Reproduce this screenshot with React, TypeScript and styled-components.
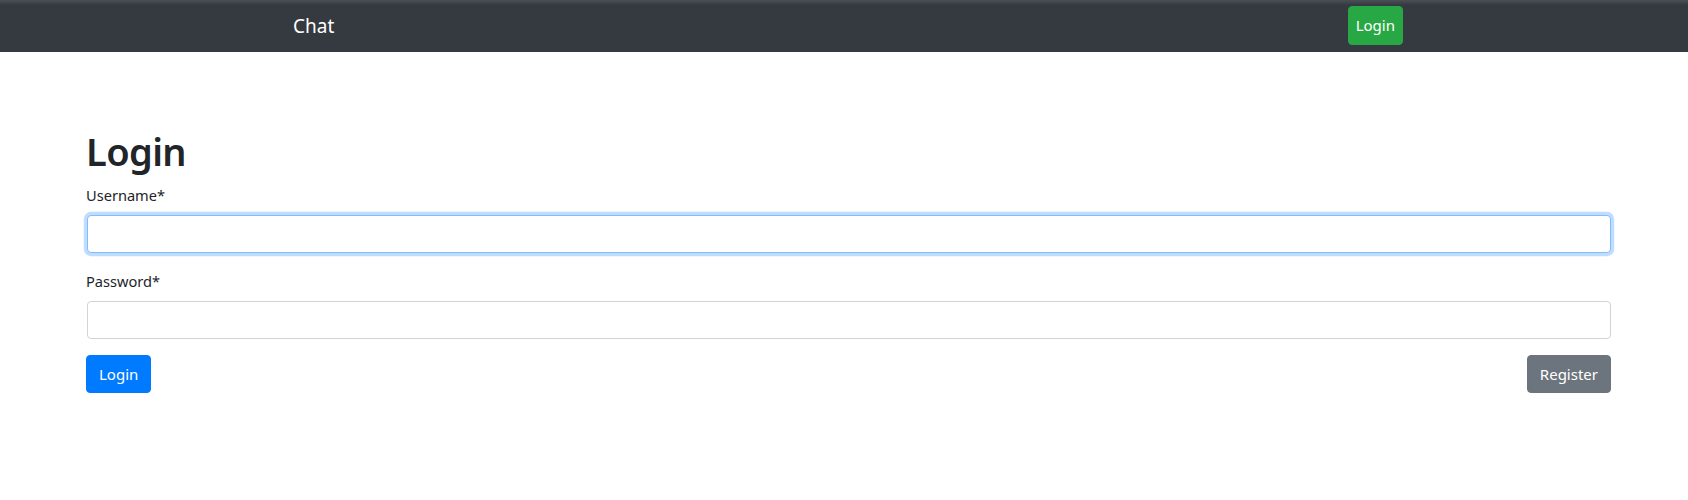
import React from 'react';
import styled, { createGlobalStyle } from 'styled-components';

const GlobalStyle = createGlobalStyle`
  * {
    box-sizing: border-box;
  }

  body {
    margin: 0;
    background: #fff;
    color: #212529;
    font-family: 'Noto Sans', 'Open Sans', sans-serif;
    font-size: 16px;
    line-height: 1.5;
  }
`;

const NavBar = styled.nav`
  height: 52px;
  background: linear-gradient(to bottom, #4b5056 0px, #343a40 5px, #343a40 100%);
  display: flex;
  align-items: center;
  justify-content: space-between;
  padding: 0 285px 0 293px;
`;

const Brand = styled.a`
  color: #fff;
  font-size: 19px;
  line-height: 1.5;
  text-decoration: none;
`;

const Button = styled.button<{ $variant: 'primary' | 'secondary' | 'success'; $compact?: boolean }>`
  font-family: inherit;
  font-size: 15px;
  line-height: 1.5;
  color: #fff;
  border: 1px solid transparent;
  border-radius: 4px;
  padding: ${(p) => (p.$compact ? '6px 7px' : '6px 12px')};
  height: ${(p) => (p.$compact ? '39px' : '38px')};
  cursor: pointer;
  background: ${(p) =>
    p.$variant === 'primary' ? '#007bff' : p.$variant === 'success' ? '#28a745' : '#6c757d'};
  border-color: ${(p) =>
    p.$variant === 'primary' ? '#007bff' : p.$variant === 'success' ? '#28a745' : '#6c757d'};
`;

const NavButton = styled(Button)`
  margin-top: -2px;
`;

const Main = styled.main`
  padding: 76px 77px 0 87px;
`;

const Title = styled.h1`
  font-size: 38px;
  font-weight: 600;
  line-height: 47px;
  margin: 0 0 8px -1px;
  letter-spacing: -0.6px;
`;

const FormGroup = styled.div`
  margin-bottom: 16px;
`;

const Label = styled.label`
  display: block;
  margin-bottom: 8px;
  font-size: 14.6px;
  line-height: 24px;
  margin-left: -1px;
`;

const Input = styled.input<{ $focused?: boolean }>`
  display: block;
  width: 100%;
  height: 38px;
  padding: 6px 12px;
  font-family: inherit;
  font-size: 16px;
  color: #495057;
  background: #fff;
  border: 1px solid ${(p) => (p.$focused ? '#80bdff' : '#ced4da')};
  border-radius: 4px;
  outline: none;
  box-shadow: ${(p) => (p.$focused ? '0 0 0 3.2px rgba(0, 123, 255, 0.25)' : 'none')};
`;

const Actions = styled.div`
  display: flex;
  justify-content: space-between;
  margin-left: -1px;
`;

export default function App() {
  return (
    <>
      <GlobalStyle />
      <NavBar>
        <Brand href="#">Chat</Brand>
        <NavButton $variant="success" $compact>
          Login
        </NavButton>
      </NavBar>
      <Main>
        <Title>Login</Title>
        <form onSubmit={(e) => e.preventDefault()}>
          <FormGroup>
            <Label htmlFor="username">Username*</Label>
            <Input id="username" type="text" $focused />
          </FormGroup>
          <FormGroup>
            <Label htmlFor="password">Password*</Label>
            <Input id="password" type="password" />
          </FormGroup>
          <Actions>
            <Button $variant="primary" type="submit">
              Login
            </Button>
            <Button $variant="secondary" type="button">
              Register
            </Button>
          </Actions>
        </form>
      </Main>
    </>
  );
}
